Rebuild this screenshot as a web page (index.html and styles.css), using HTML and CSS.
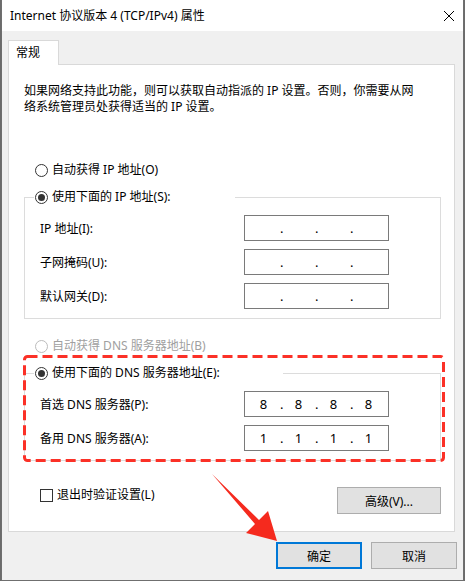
FILE: index.html
```html
<!DOCTYPE html>
<html lang="zh-CN">
<head>
    <meta charset="UTF-8" />
    <title>Internet 协议版本 4 (TCP/IPv4) 属性</title>
    <link rel="stylesheet" href="styles.css">
</head>
<body>
    <div class="window">
        <div class="titlebar">
            <span class="title">Internet 协议版本 4 (TCP/IPv4) 属性</span>
            <svg class="close" width="12" height="12" viewBox="0 0 12 12">
                <path d="M1 1 L11 11 M11 1 L1 11" stroke="#000" stroke-width="1" fill="none" />
            </svg>
        </div>

        <div class="content">
            <div class="tab">常规</div>
            <div class="panel">
                <p class="desc">如果网络支持此功能，则可以获取自动指派的 IP 设置。否则，你需要从网<br>络系统管理员处获得适当的 IP 设置。</p>

                <label class="option first">
                    <span class="radio"></span>自动获得 IP 地址(O)
                </label>

                <fieldset class="group">
                    <legend class="legend ip-legend">
                        <span class="radio checked"></span>使用下面的 IP 地址(S):
                    </legend>
                    <div class="rows">
                        <div class="row">
                            <span>IP 地址(I):</span>
                            <div class="ip"><span class="oct"></span><span class="dot">.</span><span class="oct"></span><span class="dot">.</span><span class="oct"></span><span class="dot">.</span><span class="oct"></span></div>
                        </div>
                        <div class="row">
                            <span>子网掩码(U):</span>
                            <div class="ip"><span class="oct"></span><span class="dot">.</span><span class="oct"></span><span class="dot">.</span><span class="oct"></span><span class="dot">.</span><span class="oct"></span></div>
                        </div>
                        <div class="row">
                            <span>默认网关(D):</span>
                            <div class="ip"><span class="oct"></span><span class="dot">.</span><span class="oct"></span><span class="dot">.</span><span class="oct"></span><span class="dot">.</span><span class="oct"></span></div>
                        </div>
                    </div>
                </fieldset>

                <label class="option disabled">
                    <span class="radio"></span>自动获得 DNS 服务器地址(B)
                </label>

                <fieldset class="group">
                    <legend class="legend dns-legend">
                        <span class="radio checked"></span>使用下面的 DNS 服务器地址(E):
                    </legend>
                    <div class="rows">
                        <div class="row">
                            <span>首选 DNS 服务器(P):</span>
                            <div class="ip"><span class="oct">8</span><span class="dot">.</span><span class="oct">8</span><span class="dot">.</span><span class="oct">8</span><span class="dot">.</span><span class="oct">8</span></div>
                        </div>
                        <div class="row">
                            <span>备用 DNS 服务器(A):</span>
                            <div class="ip"><span class="oct">1</span><span class="dot">.</span><span class="oct">1</span><span class="dot">.</span><span class="oct">1</span><span class="dot">.</span><span class="oct">1</span></div>
                        </div>
                    </div>
                </fieldset>

                <div class="panel-bottom">
                    <label class="check-label">
                        <span class="checkbox"></span>退出时验证设置(L)
                    </label>
                    <button type="button" class="btn advanced">高级(V)...</button>
                </div>
            </div>

            <div class="footer">
                <button type="button" class="btn default">确定</button>
                <button type="button" class="btn">取消</button>
            </div>
        </div>

        <!-- annotation overlays -->
        <svg class="highlight" width="422" height="107" viewBox="0 0 422 107">
            <rect x="1.5" y="1.5" width="419" height="104" rx="3" fill="none" stroke="#fb3127" stroke-width="3" stroke-dasharray="10 5" />
        </svg>
        <svg class="arrow" width="90" height="85" viewBox="0 0 90 85">
            <polygon points="12,9 59,55 68,46 77,76 46,68 55,59" fill="#f52a1e" />
        </svg>
    </div>
</body>
</html>
```

FILE: styles.css
```css
/* 页面 */
body {
    margin: 0;
    padding: 0;
    background: #6b6b6b;
    font-family: "Noto Sans", "Noto Sans CJK SC", sans-serif;
    font-size: 12px;
    color: #000;
}

/* 窗口 */
.window {
    position: relative;
    margin-left: 1px;
    width: 461px;
    height: 580px;
    background: #f0f0f0;
    border: 1px solid #6f6f6f;
    border-top: none;
}

.titlebar {
    height: 31px;
    background: #fff;
    display: flex;
    align-items: center;
    justify-content: space-between;
    padding: 0 8px 0 8px;
}

.title {
    line-height: 16px;
}

.close {
    margin-right: 0;
}

.content {
    padding: 9px 6px 0 6px;
}

/* 选项卡 */
.tab {
    position: relative;
    width: 51px;
    height: 25px;
    box-sizing: border-box;
    margin-bottom: -1px;
    padding: 4px 0 0 7px;
    line-height: 16px;
    background: #fff;
    border: 1px solid #d9d9d9;
    border-bottom: none;
}

.panel {
    width: 447px;
    height: 468px;
    box-sizing: border-box;
    background: #fff;
    border: 1px solid #d9d9d9;
    padding: 18px 13px 0 15px;
}

.desc {
    margin: 0;
    line-height: 16px;
    white-space: nowrap;
}

/* 单选项 */
.option {
    display: flex;
    align-items: center;
    height: 16px;
    line-height: 16px;
    padding-left: 11px;
}

.option.first {
    margin-top: 47px;
}

.option.disabled {
    margin-top: 19px;
    color: #a0a0a0;
}

.option.disabled .radio {
    border-color: #bcbcbc;
}

.radio {
    width: 13px;
    height: 13px;
    box-sizing: border-box;
    border: 1px solid #333;
    border-radius: 50%;
    margin-right: 4px;
    display: flex;
    align-items: center;
    justify-content: center;
    background: #fff;
}

.radio.checked::after {
    content: "";
    width: 7px;
    height: 7px;
    border-radius: 50%;
    background: #333;
}

/* 分组框 */
.group {
    margin: 11px 0 0 0;
    padding: 0 51px 9px 15px;
    border: 1px solid #dcdcdc;
    min-width: 0;
}

.legend {
    display: flex;
    align-items: center;
    height: 16px;
    line-height: 16px;
    margin-left: -6px;
    padding: 0 0 0 1px;
    box-sizing: border-box;
    background: #fff;
}

.ip-legend {
    width: 201px;
}

.dns-legend {
    width: 249px;
}

.rows {
    margin-top: 10px;
    display: flex;
    flex-direction: column;
    gap: 8px;
}

.row {
    display: flex;
    align-items: center;
    justify-content: space-between;
    height: 26px;
}

/* IP 输入框 */
.ip {
    width: 145px;
    height: 26px;
    box-sizing: border-box;
    border: 1px solid #7a7a7a;
    padding-left: 2px;
    display: flex;
    align-items: center;
    font-size: 13px;
}

.oct {
    width: 33px;
    text-align: center;
}

.dot {
    width: 2px;
}

/* 底部 */
.panel-bottom {
    margin-top: 26px;
    display: flex;
    align-items: flex-start;
    justify-content: space-between;
}

.check-label {
    display: flex;
    align-items: center;
    height: 16px;
    line-height: 16px;
    margin-left: 16px;
}

.checkbox {
    width: 13px;
    height: 13px;
    box-sizing: border-box;
    border: 1px solid #333;
    margin-right: 4px;
    background: #fff;
}

.btn {
    width: 86px;
    height: 27px;
    box-sizing: border-box;
    background: #e1e1e1;
    border: 1px solid #adadad;
    font-family: inherit;
    font-size: 12px;
    color: #000;
    padding: 0;
}

.btn.advanced {
    width: 104px;
}

.btn.default {
    border: 2px solid #0078d7;
}

.footer {
    margin-top: 10px;
    display: flex;
    justify-content: flex-end;
    gap: 9px;
    padding-right: 0;
}

/* 标注 */
.highlight {
    position: absolute;
    left: 21px;
    top: 355px;
}

.arrow {
    position: absolute;
    left: 198px;
    top: 465px;
}
```
